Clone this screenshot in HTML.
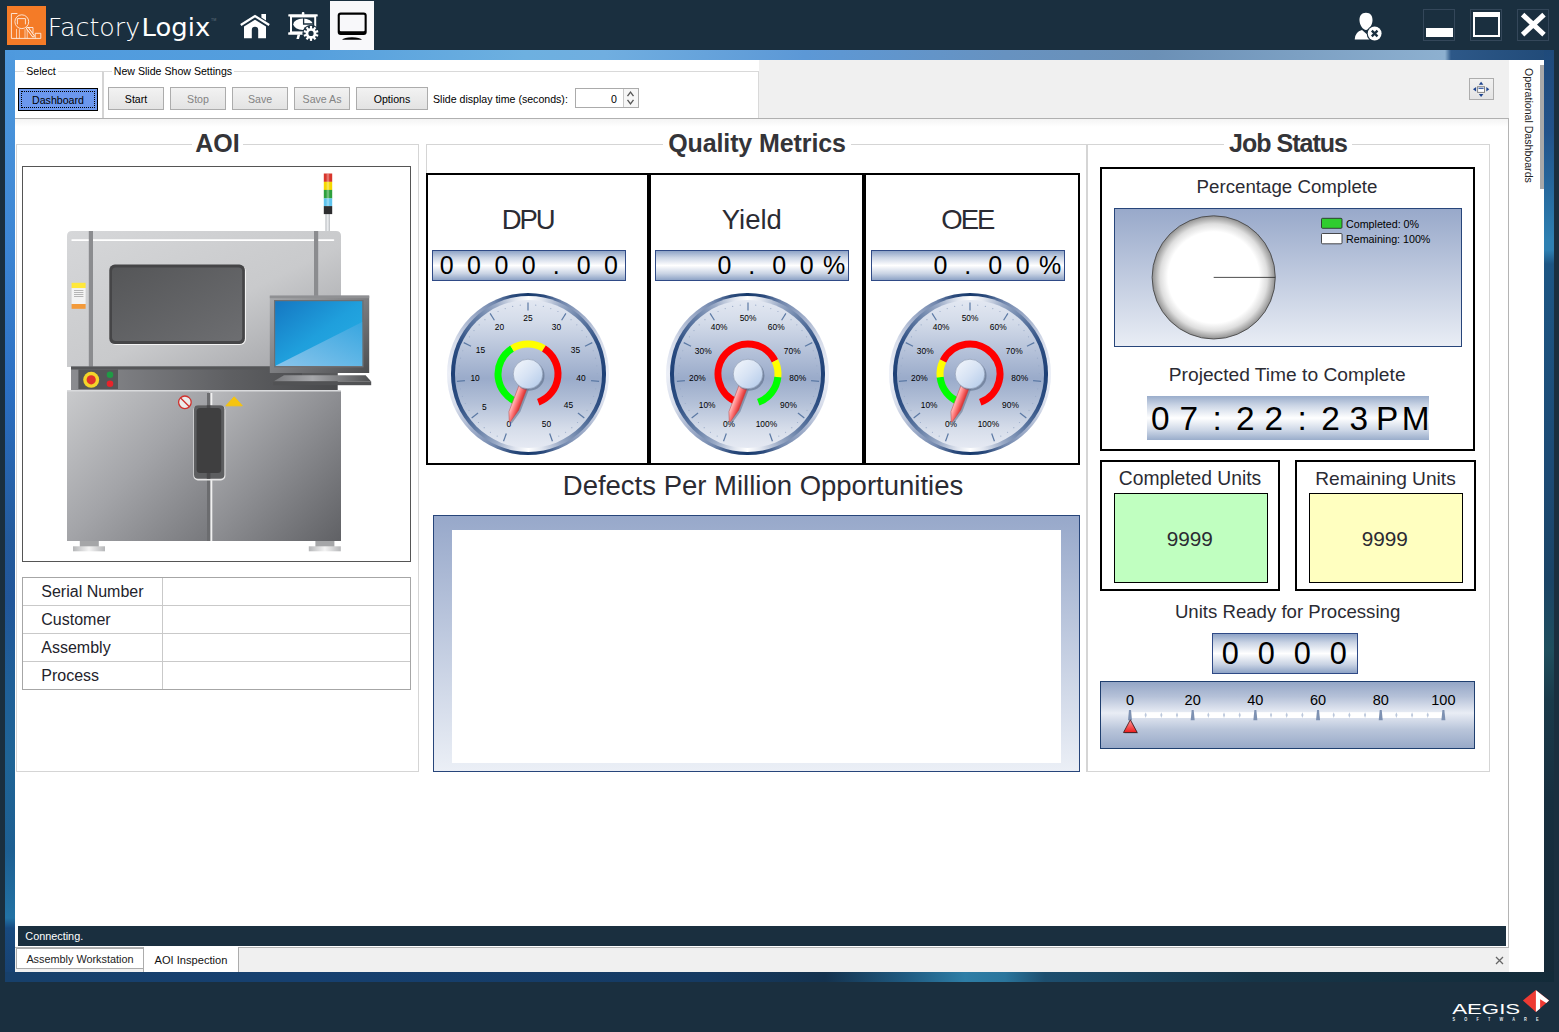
<!DOCTYPE html>
<html><head><meta charset="utf-8"><title>FactoryLogix - AOI Inspection</title>
<style>
html,body{margin:0;padding:0}
body{width:1559px;height:1032px;overflow:hidden;background:#1a2f3f;position:relative;font-family:"Liberation Sans",sans-serif;color:#000}
div{position:absolute;box-sizing:border-box}
svg{position:absolute;overflow:visible}
.t{white-space:nowrap}
.ui{font-size:10.6px;line-height:12px;white-space:nowrap}
.btn{border:1px solid #acacac;background:linear-gradient(#f2f2f2,#e3e3e3);text-align:center;font-size:10.6px;line-height:22.5px;white-space:nowrap}
.dis{color:#838383}
.h{font-weight:bold;color:#343438;white-space:nowrap;background:#fff;text-align:center}
.lbl{color:#2b2b33;white-space:nowrap}
.dig{background:linear-gradient(#8ea3c6 0%,#c9d3e4 22%,#ffffff 50%,#c9d3e4 78%,#8ea3c6 100%);border:1px solid #2f4a86}
.dc{text-align:center;white-space:nowrap;color:#000}
.gb{border:1px solid #d5d5d5}
.bb{border:2px solid #000;background:#fff}
</style></head><body>

<div style="left:5px;top:50px;width:1549px;height:10px;background:linear-gradient(90deg,#4f9ade 0px,#559fdd 300px,#6db0e0 520px,#70aee0 600px,#5c98d6 800px,#6792c0 1000px,#6b90b6 1150px,#8db0d0 1438px,#8db0d0 1440px,#2d5888 1446px,#204a78 1549px)"></div>
<div style="left:5px;top:50px;width:10px;height:932px;background:linear-gradient(180deg,#4f9ade 0px,#3d86d4 190px,#2b6fc2 340px,#235a9c 490px,#21569a 550px,#1f5f98 630px,#1f6496 710px,#1d5f92 800px,#2272a4 868px,#184a80 878px,#17406f 932px)"></div>
<div style="left:1544px;top:50px;width:10px;height:932px;background:linear-gradient(180deg,#1f4a7a 0px,#22528a 80px,#25659a 130px,#2e80b2 190px,#2e80b2 200px,#1d5684 214px,#1c4a74 430px,#1a4466 530px,#1f4f5e 600px,#1a3a4a 650px,#172f3f 750px,#152a38 932px)"></div>
<div style="left:5px;top:972px;width:1549px;height:10px;background:linear-gradient(90deg,#17406b 0px,#164070 300px,#153a62 700px,#14324e 820px,#1f5a80 900px,#2e7ea6 960px,#2a759c 1000px,#1d4e6e 1040px,#163548 1250px,#132b39 1549px)"></div>
<div style="left:15px;top:60px;width:1529px;height:912px;background:#fff"></div>
<div style="left:759px;top:60px;width:750px;height:58px;background:#f0f0f0"></div>
<div style="left:15px;top:117.5px;width:1494px;height:1.6px;background:#b0b0b0"></div>
<div style="left:15px;top:119px;width:1494px;height:8px;background:linear-gradient(#f4f4f4,#ffffff)"></div>
<div style="left:1508px;top:118px;width:1px;height:830px;background:#b4b4b4"></div>
<div style="left:15px;top:71px;width:87px;height:1px;background:#d9d9d9"></div>
<div style="left:102px;top:71px;width:2px;height:47px;background:#d4d4d4"></div>
<div class="ui" style="left:24px;top:65px;width:34px;height:12px;background:#fff;text-align:center">Select</div>
<div style="left:103px;top:71px;width:656px;height:47px;border-top:1px solid #d9d9d9;border-right:1px solid #d9d9d9"></div>
<div class="ui" style="left:112px;top:65px;width:122px;height:12px;background:#fff;text-align:center">New Slide Show Settings</div>
<div style="left:18px;top:88px;width:80px;height:23px;border:1.3px solid #000;background:#6c98ee"></div>
<div class="ui" style="left:21px;top:91px;width:74px;height:17px;border:1px dotted #000;text-align:center;line-height:16.5px">Dashboard</div>
<div class="btn" style="left:108px;top:87px;width:56px;height:23px;">Start</div>
<div class="btn dis" style="left:170px;top:87px;width:56px;height:23px;">Stop</div>
<div class="btn dis" style="left:232px;top:87px;width:56px;height:23px;">Save</div>
<div class="btn dis" style="left:294px;top:87px;width:56px;height:23px;">Save As</div>
<div class="btn" style="left:356px;top:87px;width:72px;height:23px;">Options</div>
<div class="t" style="left:433px;top:92.5px;font-size:10.6px;line-height:10.6px;line-height:12px">Slide display time (seconds):</div>
<div style="left:575px;top:88px;width:64px;height:20px;border:1px solid #ababab;background:#fff"></div>
<div style="left:623px;top:89px;width:15px;height:18px;border-left:1px solid #c8c8c8;background:#f6f6f6"></div>
<div class="t" style="left:611px;top:92.5px;font-size:10.6px;line-height:10.6px;line-height:12px">0</div>
<svg style="left:623px;top:89px" width="15" height="18" viewBox="0 0 15 18"><path d="M4.5 7.2 L7.5 3.2 L10.5 7.2 M4.5 10.8 L7.5 14.8 L10.5 10.8" fill="none" stroke="#555" stroke-width="1.3"/></svg>
<div style="left:1469px;top:78px;width:25px;height:22px;border:1px solid #adadad;background:linear-gradient(#f1f1f1,#e4e4e4)"></div>
<svg style="left:1469px;top:78px" width="25" height="22" viewBox="1469 78 25 22"><g fill="#1f458f"><path d="M1481.1 81.7 L1483.4 84.8 H1478.8Z"/><path d="M1481.1 96.9 L1483.4 94.1 H1478.8Z"/><path d="M1473 89.3 L1476.1 87 V91.6Z"/><path d="M1489.3 89.3 L1486.3 87 V91.6Z"/></g><rect x="1477.6" y="86.7" width="6.9" height="5.7" fill="#fff" stroke="#858585" stroke-width="1"/><rect x="1478.2" y="87.3" width="5.7" height="1.9" fill="#c9d7f0"/><rect x="1478.6" y="87.8" width="4.9" height="1" fill="#2b4f9a"/></svg>
<div style="left:1540px;top:65px;width:4px;height:124px;background:#a9a9a9"></div>
<div class="ui" style="left:1528.6px;top:68px;width:0;height:0;transform:rotate(90deg);transform-origin:0 0"><div class="ui" style="left:0;top:-6px;color:#222">Operational Dashboards</div></div>
<div style="left:18px;top:926px;width:1488px;height:20px;background:#1a2f3f"></div>
<div class="t" style="left:25.3px;top:929.6px;font-size:10.85px;line-height:10.85px;color:#fff;line-height:12px">Connecting.</div>
<div style="left:15px;top:947px;width:1494px;height:25px;background:#f0f0f0;border-top:1px solid #b4b4b4"></div>
<div style="left:16px;top:948px;width:128px;height:21px;background:#fff;border:1px solid #acacac"></div>
<div class="t" style="left:26.4px;top:953px;font-size:10.85px;line-height:10.85px;line-height:12px;color:#222">Assembly Workstation</div>
<div style="left:143px;top:947px;width:96px;height:25px;background:#fff;border-right:1px solid #acacac;border-left:1px solid #acacac"></div>
<div class="t" style="left:154.6px;top:954px;font-size:11.1px;line-height:11.1px;line-height:12px;color:#111">AOI Inspection</div>
<svg style="left:1495px;top:956px" width="9" height="9" viewBox="0 0 9 9"><path d="M1 1 L8 8 M8 1 L1 8" stroke="#666" stroke-width="1.3" fill="none"/></svg>
<div class="gb" style="left:16px;top:144px;width:403px;height:628px;"></div>
<div class="h" style="left:192px;top:129.3px;width:51px;height:28px;font-size:25px;line-height:28px">AOI</div>
<div style="left:426px;top:144px;width:662px;height:628px;border-top:1px solid #d5d5d5;border-right:1px solid #d5d5d5"></div>
<div style="left:426px;top:144px;width:1px;height:30px;background:#d5d5d5"></div>
<div class="h" style="left:663px;top:129.3px;width:188px;height:28px;font-size:25px;line-height:28px;letter-spacing:-0.1px">Quality Metrics</div>
<div class="gb" style="left:1086px;top:144px;width:404px;height:628px;"></div>
<div class="h" style="left:1224px;top:129.3px;width:128px;height:28px;font-size:25px;line-height:28px;letter-spacing:-1px">Job Status</div>
<div style="left:7px;top:6px;width:39px;height:39px;background:#f47b27"></div>
<svg style="left:7px;top:6px" width="39" height="39" viewBox="0 0 39 39" fill="none" stroke="#fff" stroke-width="0.85" opacity="0.92">
<path d="M10.4 7.5 H4.4 V32.4 H33.8 V27.3 H28.2 V32.4"/>
<circle cx="14.8" cy="15.7" r="6.9"/>
<path d="M10.4 18.4 V12.6 H18.4 V18.4"/>
<path d="M9.5 22.9 V32.4 M12.4 23.2 V32.4 M18 23.2 V32.4 M20.2 22.5 V32.4" stroke-opacity="0.8"/>
<path d="M21 21.5 H26 V27"/>
<path d="M20.6 22.4 L26.2 29.8" stroke-width="3" stroke-linecap="round"/>
<path d="M20.6 22.4 L26.2 29.8" stroke="#f47b27" stroke-width="1.3" stroke-linecap="round"/>
</svg>
<svg style="left:0;top:0" width="230" height="50" viewBox="0 0 230 50">
<text x="47.8" y="35.5" font-family="'DejaVu Sans Light','DejaVu Sans','Liberation Sans',sans-serif" font-weight="200" font-size="24.5" fill="#fff" textLength="92.3" lengthAdjust="spacingAndGlyphs">Factory</text>
<text x="141.6" y="35.5" font-family="'DejaVu Sans','Liberation Sans',sans-serif" font-weight="normal" font-size="24.5" fill="#fff" textLength="68.6" lengthAdjust="spacingAndGlyphs">Logix</text>
<text x="211" y="21" font-family="'Liberation Sans',sans-serif" font-size="3.6" fill="#66747f">TM</text>
</svg>
<svg style="left:238px;top:10px" width="36" height="32" viewBox="238 10 36 32">
<path d="M240.8 25 L255 16 L269.2 25" fill="none" stroke="#fff" stroke-width="2.3" stroke-linejoin="miter"/>
<path d="M261.4 13.9 H266 V20.6 L261.4 17.6Z" fill="#fff"/>
<path d="M244 26.6 L255 19.7 L266 26.6 V38.2 H258.2 V30 A3.2 3.2 0 0 0 251.8 30 V38.2 H244Z" fill="#fff"/>
</svg>
<svg style="left:286px;top:10px" width="36" height="34" viewBox="286 10 36 34">
<rect x="301.8" y="12" width="2.6" height="3" rx="1" fill="#fff"/>
<rect x="288.3" y="14.2" width="29.4" height="2.3" rx="0.6" fill="#fff"/>
<rect x="291" y="16.4" width="24.2" height="16" fill="none" stroke="#fff" stroke-width="2"/>
<rect x="288.2" y="32.2" width="19" height="2.6" rx="0.6" fill="#fff"/>
<path d="M297.6 34.5 L296.4 38.9 H299 L300.2 34.5Z" fill="#fff"/>
<ellipse cx="303" cy="24.3" rx="9.7" ry="5.7" fill="#fff"/>
<path d="M303.6 18 V24 H313.4" fill="none" stroke="#1a2f3f" stroke-width="1.3"/>
<circle cx="311" cy="33.4" r="8.6" fill="#1a2f3f"/>
<g fill="#fff"><circle cx="311" cy="33.4" r="5.3"/>
<rect x="309.9" y="25.9" width="2.2" height="4" transform="rotate(0 311 33.4)"/><rect x="309.9" y="25.9" width="2.2" height="4" transform="rotate(36 311 33.4)"/><rect x="309.9" y="25.9" width="2.2" height="4" transform="rotate(72 311 33.4)"/><rect x="309.9" y="25.9" width="2.2" height="4" transform="rotate(108 311 33.4)"/><rect x="309.9" y="25.9" width="2.2" height="4" transform="rotate(144 311 33.4)"/><rect x="309.9" y="25.9" width="2.2" height="4" transform="rotate(180 311 33.4)"/><rect x="309.9" y="25.9" width="2.2" height="4" transform="rotate(216 311 33.4)"/><rect x="309.9" y="25.9" width="2.2" height="4" transform="rotate(252 311 33.4)"/><rect x="309.9" y="25.9" width="2.2" height="4" transform="rotate(288 311 33.4)"/><rect x="309.9" y="25.9" width="2.2" height="4" transform="rotate(324 311 33.4)"/>
</g>
<circle cx="311" cy="33.4" r="2.6" fill="#1a2f3f"/>
</svg>
<div style="left:330px;top:1px;width:44px;height:49px;background:#f8f8fa"></div>
<svg style="left:330px;top:1px" width="44" height="49" viewBox="330 1 44 49">
<rect x="337.7" y="12.5" width="29" height="22.5" rx="3" fill="#000"/>
<rect x="339.8" y="14.8" width="24.8" height="16.4" rx="1" fill="#f8f8fa"/>
<path d="M342 39.8 Q344 37.2 352 37.2 Q360 37.2 362 39.8Z" fill="#000"/>
</svg>
<svg style="left:1350px;top:8px" width="36" height="36" viewBox="1350 8 36 36">
<path d="M1366 12.7 C1370.6 12.7 1372.7 16 1372.5 20.5 C1372.3 25.2 1369 29.9 1366 29.9 C1363 29.9 1359.7 25.2 1359.5 20.5 C1359.3 16 1361.4 12.7 1366 12.7Z" fill="#fff"/>
<path d="M1354.7 39.5 Q1355 31.8 1362 30 L1366.6 34 L1370.5 30.6 Q1374 31 1376 33 V39.5Z" fill="#fff"/>
<circle cx="1374.65" cy="33.5" r="8" fill="#1a2f3f"/>
<circle cx="1374.65" cy="33.5" r="6.9" fill="#fff"/>
<path d="M1371.8 30.65 L1377.5 36.35 M1377.5 30.65 L1371.8 36.35" stroke="#1a2f3f" stroke-width="2.3" fill="none"/>
</svg>
<div style="left:1423px;top:9px;width:32px;height:32px;border:1px solid #34475a"></div>
<div style="left:1470px;top:9px;width:32px;height:32px;border:1px solid #34475a"></div>
<div style="left:1517px;top:9px;width:32px;height:32px;border:1px solid #34475a"></div>
<div style="left:1426px;top:28px;width:27px;height:8.5px;background:#fff"></div>
<div style="left:1472.5px;top:12px;width:27px;height:24.5px;border:2.5px solid #fff;border-top-width:5px"></div>
<svg style="left:1517px;top:9px" width="32" height="32" viewBox="1517 9 32 32"><path d="M1522.6 14.6 L1544 34.6 M1544 14.6 L1522.6 34.6" stroke="#fff" stroke-width="5" fill="none"/></svg>
<svg style="left:1445px;top:985px" width="114" height="44" viewBox="1445 985 114 44">
<text x="1452.2" y="1013.7" font-family="'Liberation Sans',sans-serif" font-size="14.9" fill="#fff" textLength="68" lengthAdjust="spacingAndGlyphs">AEGIS</text>
<text transform="translate(1452.6,1021.2) scale(0.68,1)" x="0" y="0" font-family="'Liberation Sans',sans-serif" font-weight="bold" font-size="5.7" fill="#e6eaee" textLength="126.5" lengthAdjust="spacing">SOFTWARE</text>
<path d="M1522.9 1000.4 L1535.9 990 L1549.2 1000.4 L1535.9 1012Z" fill="#ee3a33"/>
<path d="M1535.9 990.3 L1549 1000.4 L1546.3 1002.9 L1540.1 999.3 L1540.1 1008.4 L1535.9 1011.9Z" fill="#fff"/>
</svg>
<div style="left:22px;top:166px;width:389px;height:396px;border:1px solid #555;background:#fff"></div>
<svg style="left:22px;top:166px" width="389" height="396" viewBox="22 166 389 396">
<defs>
<linearGradient id="gTop" x1="0" y1="0" x2="1" y2="1"><stop offset="0" stop-color="#d6d7d9"/><stop offset="0.55" stop-color="#c9cacc"/><stop offset="1" stop-color="#9fa0a4"/></linearGradient>
<linearGradient id="gBotL" x1="0" y1="0" x2="1" y2="1"><stop offset="0" stop-color="#c9cacc"/><stop offset="0.5" stop-color="#a3a4a8"/><stop offset="1" stop-color="#77787c"/></linearGradient>
<linearGradient id="gBotR" x1="0" y1="0" x2="1" y2="1"><stop offset="0" stop-color="#b9babd"/><stop offset="0.5" stop-color="#8d8e92"/><stop offset="1" stop-color="#606165"/></linearGradient>
<linearGradient id="gStrip" x1="0" y1="0" x2="1" y2="0"><stop offset="0" stop-color="#8b8c90"/><stop offset="0.6" stop-color="#5e5f62"/><stop offset="1" stop-color="#48494b"/></linearGradient>
<linearGradient id="gWin" x1="0" y1="0" x2="1" y2="1"><stop offset="0" stop-color="#555658"/><stop offset="1" stop-color="#6d6e71"/></linearGradient>
<linearGradient id="gScr" x1="0" y1="0" x2="1" y2="1"><stop offset="0" stop-color="#1577c2"/><stop offset="0.5" stop-color="#1f9fdc"/><stop offset="1" stop-color="#29b0e6"/></linearGradient>
<linearGradient id="gScr2" x1="0" y1="1" x2="1" y2="0"><stop offset="0" stop-color="#9ccbee"/><stop offset="1" stop-color="#3ba6e0"/></linearGradient>
<linearGradient id="gMon" x1="0" y1="0" x2="1" y2="1"><stop offset="0" stop-color="#a9aaad"/><stop offset="0.5" stop-color="#7d7e81"/><stop offset="1" stop-color="#4c4d4f"/></linearGradient>
<linearGradient id="gKb" x1="0" y1="0" x2="1" y2="0"><stop offset="0" stop-color="#77787b"/><stop offset="0.4" stop-color="#a6a7aa"/><stop offset="1" stop-color="#4e4f51"/></linearGradient>
<linearGradient id="gFoot" x1="0" y1="0" x2="1" y2="0"><stop offset="0" stop-color="#b5b6b8"/><stop offset="0.5" stop-color="#f4f4f4"/><stop offset="1" stop-color="#b5b6b8"/></linearGradient>
<linearGradient id="gPole" x1="0" y1="0" x2="1" y2="0"><stop offset="0" stop-color="#b9bcc0"/><stop offset="0.5" stop-color="#eef0f2"/><stop offset="1" stop-color="#b9bcc0"/></linearGradient>
</defs>
<!-- light tower -->
<rect x="325.4" y="213" width="4.6" height="19" fill="url(#gPole)"/>
<rect x="323.8" y="173.5" width="8.4" height="8.4" fill="#d8362c"/>
<rect x="323.8" y="181.8" width="8.4" height="8.2" fill="#f5d800"/>
<rect x="323.8" y="189.9" width="8.4" height="8.6" fill="#2ea03c"/>
<rect x="323.8" y="198.4" width="8.4" height="7.8" fill="#5fc4ee"/>
<rect x="323.8" y="206.1" width="8.4" height="8" fill="#2d2d2f"/>
<rect x="326.6" y="173.5" width="2.6" height="32.6" fill="#fff" opacity="0.3"/>
<!-- feet -->
<rect x="79.8" y="540" width="19" height="7" fill="#a5a6a8"/>
<rect x="73" y="546.3" width="32" height="5" fill="url(#gFoot)"/>
<rect x="315.4" y="540" width="19" height="7" fill="#a5a6a8"/>
<rect x="308.8" y="546.3" width="32" height="5" fill="url(#gFoot)"/>
<!-- top body -->
<path d="M67 367 V236 Q67 231 72 231 H336 Q341 231 341 236 V367Z" fill="url(#gTop)"/>
<rect x="71.3" y="239.2" width="263" height="1.8" rx="0.9" fill="#fff"/>
<rect x="88.8" y="231" width="4.2" height="136" fill="#8b8c8f"/>
<rect x="314" y="231" width="4.2" height="70" fill="#8b8c8f"/>
<!-- label -->
<rect x="71.6" y="282.8" width="14" height="5.4" fill="#ffe83a"/>
<rect x="71.6" y="288.1" width="14" height="16" fill="#f3f3f3"/>
<path d="M74 290.5 H83.4 M74 292.5 H83.4 M74 294.5 H83.4 M74 296.5 H83.4" stroke="#9a9a9a" stroke-width="0.7"/>
<rect x="71.6" y="304" width="14" height="4.8" fill="#f39a3a"/>
<!-- window -->
<rect x="110" y="265.4" width="136" height="79.6" rx="6" fill="#f3f3f3"/>
<rect x="109.3" y="264.6" width="135.6" height="79.4" rx="5.5" fill="#454547"/>
<rect x="112" y="267.4" width="130.2" height="73.6" rx="4" fill="url(#gWin)"/>
<!-- strip -->
<rect x="71" y="366.5" width="266.7" height="24" fill="url(#gStrip)"/>
<rect x="71" y="366.5" width="266.7" height="3" fill="#555658"/>
<rect x="78.4" y="369.4" width="39.6" height="19.6" fill="#555658"/>
<circle cx="91.2" cy="379.8" r="8" fill="#f3d52a"/>
<circle cx="91.2" cy="379.8" r="4.6" fill="#e0332b"/>
<circle cx="110" cy="374.7" r="3.3" fill="#1f9a45"/>
<circle cx="110" cy="383.7" r="3.3" fill="#e8232a"/>
<!-- bottom body -->
<rect x="67" y="390" width="274" height="2" fill="#d9dadc"/>
<rect x="67" y="391.5" width="142" height="149.5" fill="url(#gBotL)"/>
<rect x="209" y="391.5" width="132" height="149.5" fill="url(#gBotR)"/>
<rect x="207" y="393" width="3.6" height="148" fill="#6b6c6f"/>
<rect x="210.4" y="393" width="1.9" height="148" fill="#f1f1f1"/>
<!-- handle -->
<rect x="193.4" y="405.4" width="32" height="75" rx="4.5" fill="#e8e8e8"/>
<rect x="194" y="405.2" width="30.4" height="73.6" rx="4" fill="#5d5e60"/>
<rect x="206.8" y="405.2" width="3.6" height="73.6" fill="#49494b"/>
<rect x="196.6" y="408" width="24.6" height="65" rx="3.5" fill="#3f3f40"/>
<!-- no-entry -->
<circle cx="184.9" cy="402.3" r="6.3" fill="#ececec" stroke="#d0312d" stroke-width="1.3"/>
<path d="M180.4 397.8 L189.4 406.8" stroke="#d0312d" stroke-width="1.3"/>
<!-- warning triangle -->
<path d="M234.2 396.8 L242.3 405.8 H225.9Z" fill="#f5c40f" stroke="#f5c40f" stroke-width="1" stroke-linejoin="round"/>
<!-- monitor -->
<rect x="302" y="372" width="35" height="4" fill="#58595b"/>
<rect x="269.8" y="295.6" width="99.4" height="77.4" fill="url(#gMon)"/>
<rect x="269.8" y="295.6" width="99.4" height="2.6" fill="#8f9093"/>
<rect x="274" y="300" width="89.6" height="67.4" fill="#6e6f72"/>
<rect x="275.2" y="301.2" width="87" height="64.8" fill="url(#gScr)"/>
<path d="M276 365.6 L362.2 322 V366 H276Z" fill="url(#gScr2)" opacity="0.85"/>
<!-- keyboard -->
<path d="M273.4 381.6 L284 375.2 H365.6 L371.2 381.6Z" fill="url(#gKb)"/>
<rect x="273.4" y="381.4" width="97.8" height="3.8" fill="#515254"/>
</svg>
<div style="left:22px;top:577px;width:389px;height:113px;border:1px solid #a6a6a6;background:#fff"></div>
<div style="left:23px;top:605px;width:387px;height:1px;background:#c9c9c9"></div>
<div style="left:23px;top:633px;width:387px;height:1px;background:#c9c9c9"></div>
<div style="left:23px;top:661px;width:387px;height:1px;background:#c9c9c9"></div>
<div style="left:162px;top:578px;width:1px;height:111px;background:#c9c9c9"></div>
<div class="t" style="left:41.3px;top:583px;font-size:16px;line-height:16px;color:#23232b;line-height:18px">Serial Number</div>
<div class="t" style="left:41.3px;top:611px;font-size:16px;line-height:16px;color:#23232b;line-height:18px">Customer</div>
<div class="t" style="left:41.3px;top:639px;font-size:16px;line-height:16px;color:#23232b;line-height:18px">Assembly</div>
<div class="t" style="left:41.3px;top:667px;font-size:16px;line-height:16px;color:#23232b;line-height:18px">Process</div>
<div class="bb" style="left:426px;top:173px;width:223px;height:292px;"></div>
<div class="bb" style="left:649px;top:173px;width:215px;height:292px;"></div>
<div class="bb" style="left:864px;top:173px;width:216px;height:292px;"></div>
<div class="t" style="left:127.60000000000002px;width:800px;text-align:center;top:203.7px;font-size:27.5px;line-height:27.5px;color:#2b2b33;line-height:32px;letter-spacing:-2.2px">DPU</div>
<div class="t" style="left:351.79999999999995px;width:800px;text-align:center;top:203.7px;font-size:27.5px;line-height:27.5px;color:#2b2b33;line-height:32px">Yield</div>
<div class="t" style="left:567.3px;width:800px;text-align:center;top:203.7px;font-size:27.5px;line-height:27.5px;color:#2b2b33;line-height:32px;letter-spacing:-2px">OEE</div>
<div class="dig" style="left:432px;top:250px;width:194px;height:31px;"></div>
<div class="dc" style="left:432.9px;top:250px;width:27.4px;height:31px;line-height:31px;font-size:25px">0</div>
<div class="dc" style="left:460.3px;top:250px;width:27.4px;height:31px;line-height:31px;font-size:25px">0</div>
<div class="dc" style="left:487.7px;top:250px;width:27.4px;height:31px;line-height:31px;font-size:25px">0</div>
<div class="dc" style="left:515.1px;top:250px;width:27.4px;height:31px;line-height:31px;font-size:25px">0</div>
<div class="dc" style="left:542.5px;top:250px;width:27.4px;height:31px;line-height:31px;font-size:25px">.</div>
<div class="dc" style="left:569.9px;top:250px;width:27.4px;height:31px;line-height:31px;font-size:25px">0</div>
<div class="dc" style="left:597.3px;top:250px;width:27.4px;height:31px;line-height:31px;font-size:25px">0</div>
<div class="dig" style="left:655px;top:250px;width:194px;height:31px;"></div>
<div class="dc" style="left:710.7px;top:250px;width:27.4px;height:31px;line-height:31px;font-size:25px">0</div>
<div class="dc" style="left:738.1px;top:250px;width:27.4px;height:31px;line-height:31px;font-size:25px">.</div>
<div class="dc" style="left:765.5px;top:250px;width:27.4px;height:31px;line-height:31px;font-size:25px">0</div>
<div class="dc" style="left:792.9px;top:250px;width:27.4px;height:31px;line-height:31px;font-size:25px">0</div>
<div class="dc" style="left:820.3px;top:250px;width:27.4px;height:31px;line-height:31px;font-size:25px">%</div>
<div class="dig" style="left:871px;top:250px;width:194px;height:31px;"></div>
<div class="dc" style="left:926.7px;top:250px;width:27.4px;height:31px;line-height:31px;font-size:25px">0</div>
<div class="dc" style="left:954.1px;top:250px;width:27.4px;height:31px;line-height:31px;font-size:25px">.</div>
<div class="dc" style="left:981.5px;top:250px;width:27.4px;height:31px;line-height:31px;font-size:25px">0</div>
<div class="dc" style="left:1008.9px;top:250px;width:27.4px;height:31px;line-height:31px;font-size:25px">0</div>
<div class="dc" style="left:1036.3px;top:250px;width:27.4px;height:31px;line-height:31px;font-size:25px">%</div>
<div style="left:447.09999999999997px;top:292.8px;width:162.4px;height:162.4px;border-radius:50%;background:conic-gradient(from 0deg,#173a6c 0deg,#2c4b7c 12deg,#7086ac 25deg,#a0aeca 45deg,#d5dbe9 65deg,#eceff7 90deg,#d5dbe9 115deg,#a0aeca 135deg,#7086ac 155deg,#2c4b7c 168deg,#173a6c 180deg,#2c4b7c 192deg,#7086ac 205deg,#a0aeca 225deg,#d5dbe9 245deg,#eceff7 270deg,#d5dbe9 295deg,#a0aeca 315deg,#7086ac 335deg,#2c4b7c 348deg,#173a6c 360deg)"></div>
<div style="left:450.69999999999993px;top:296.4px;width:155.2px;height:155.2px;border-radius:50%;background:conic-gradient(from 0deg,#ffffff 0deg,#e0e5ef 10deg,#9aaac6 25deg,#5f79a2 45deg,#2f5084 65deg,#1e4076 90deg,#2f5084 115deg,#5f79a2 135deg,#9aaac6 155deg,#e0e5ef 170deg,#ffffff 180deg,#e0e5ef 190deg,#9aaac6 205deg,#5f79a2 225deg,#2f5084 245deg,#1e4076 270deg,#2f5084 295deg,#5f79a2 315deg,#9aaac6 335deg,#e0e5ef 350deg,#ffffff 360deg)"></div>
<div style="left:454.69999999999993px;top:300.4px;width:147.2px;height:147.2px;border-radius:50%;background:linear-gradient(#e3e8f2 0%,#d3dbe9 15%,#b3c0d8 36%,#9aabca 53%,#b4c1d8 70%,#d6ddea 87%,#e6eaf3 100%)"></div>
<svg style="left:446.29999999999995px;top:292px" width="164" height="164" viewBox="-82 -82 164 164"><defs><linearGradient id="nda" x1="0" y1="0" x2="1" y2="0"><stop offset="0" stop-color="#ffc4c4"/><stop offset="0.45" stop-color="#ff7c7c"/><stop offset="1" stop-color="#dc2c2c"/></linearGradient><linearGradient id="hba" x1="0" y1="0" x2="1" y2="1"><stop offset="0" stop-color="#f4f7fc"/><stop offset="0.5" stop-color="#d7e3f4"/><stop offset="1" stop-color="#b0c8e8"/></linearGradient></defs><circle cx="-30.81" cy="62.07" r="0.6" fill="#9aabc8"/><circle cx="-37.54" cy="58.25" r="0.6" fill="#9aabc8"/><circle cx="-43.80" cy="53.70" r="0.6" fill="#9aabc8"/><circle cx="-49.51" cy="48.49" r="0.6" fill="#9aabc8"/><circle cx="-59.02" cy="36.31" r="0.6" fill="#9aabc8"/><circle cx="-62.70" cy="29.51" r="0.6" fill="#9aabc8"/><circle cx="-65.60" cy="22.33" r="0.6" fill="#9aabc8"/><circle cx="-67.68" cy="14.88" r="0.6" fill="#9aabc8"/><circle cx="-69.30" cy="-0.48" r="0.6" fill="#9aabc8"/><circle cx="-68.81" cy="-8.21" r="0.6" fill="#9aabc8"/><circle cx="-67.47" cy="-15.82" r="0.6" fill="#9aabc8"/><circle cx="-65.28" cy="-23.25" r="0.6" fill="#9aabc8"/><circle cx="-58.51" cy="-37.13" r="0.6" fill="#9aabc8"/><circle cx="-54.01" cy="-43.42" r="0.6" fill="#9aabc8"/><circle cx="-48.83" cy="-49.17" r="0.6" fill="#9aabc8"/><circle cx="-43.05" cy="-54.31" r="0.6" fill="#9aabc8"/><circle cx="-29.94" cy="-62.50" r="0.6" fill="#9aabc8"/><circle cx="-22.79" cy="-65.45" r="0.6" fill="#9aabc8"/><circle cx="-15.35" cy="-67.58" r="0.6" fill="#9aabc8"/><circle cx="-7.72" cy="-68.87" r="0.6" fill="#9aabc8"/><circle cx="7.72" cy="-68.87" r="0.6" fill="#9aabc8"/><circle cx="15.35" cy="-67.58" r="0.6" fill="#9aabc8"/><circle cx="22.79" cy="-65.45" r="0.6" fill="#9aabc8"/><circle cx="29.94" cy="-62.50" r="0.6" fill="#9aabc8"/><circle cx="43.05" cy="-54.31" r="0.6" fill="#9aabc8"/><circle cx="48.83" cy="-49.17" r="0.6" fill="#9aabc8"/><circle cx="54.01" cy="-43.42" r="0.6" fill="#9aabc8"/><circle cx="58.51" cy="-37.13" r="0.6" fill="#9aabc8"/><circle cx="65.28" cy="-23.25" r="0.6" fill="#9aabc8"/><circle cx="67.47" cy="-15.82" r="0.6" fill="#9aabc8"/><circle cx="68.81" cy="-8.21" r="0.6" fill="#9aabc8"/><circle cx="69.30" cy="-0.48" r="0.6" fill="#9aabc8"/><circle cx="67.68" cy="14.88" r="0.6" fill="#9aabc8"/><circle cx="65.60" cy="22.33" r="0.6" fill="#9aabc8"/><circle cx="62.70" cy="29.51" r="0.6" fill="#9aabc8"/><circle cx="59.02" cy="36.31" r="0.6" fill="#9aabc8"/><circle cx="49.51" cy="48.49" r="0.6" fill="#9aabc8"/><circle cx="43.80" cy="53.70" r="0.6" fill="#9aabc8"/><circle cx="37.54" cy="58.25" r="0.6" fill="#9aabc8"/><circle cx="30.81" cy="62.07" r="0.6" fill="#9aabc8"/><line x1="-24.45" y1="67.19" x2="-21.68" y2="59.58" stroke="#5b79a4" stroke-width="1.2"/><line x1="-56.34" y1="44.02" x2="-49.96" y2="39.03" stroke="#5b79a4" stroke-width="1.2"/><line x1="-71.11" y1="7.47" x2="-63.05" y2="6.63" stroke="#5b79a4" stroke-width="1.2"/><line x1="-64.26" y1="-31.34" x2="-56.98" y2="-27.79" stroke="#5b79a4" stroke-width="1.2"/><line x1="-37.89" y1="-60.64" x2="-33.60" y2="-53.77" stroke="#5b79a4" stroke-width="1.2"/><line x1="-0.00" y1="-71.50" x2="-0.00" y2="-63.40" stroke="#5b79a4" stroke-width="1.2"/><line x1="37.89" y1="-60.64" x2="33.60" y2="-53.77" stroke="#5b79a4" stroke-width="1.2"/><line x1="64.26" y1="-31.34" x2="56.98" y2="-27.79" stroke="#5b79a4" stroke-width="1.2"/><line x1="71.11" y1="7.47" x2="63.05" y2="6.63" stroke="#5b79a4" stroke-width="1.2"/><line x1="56.34" y1="44.02" x2="49.96" y2="39.03" stroke="#5b79a4" stroke-width="1.2"/><line x1="24.45" y1="67.19" x2="21.68" y2="59.58" stroke="#5b79a4" stroke-width="1.2"/><text x="-19.30" y="52.70" text-anchor="middle" font-family="'Liberation Sans',sans-serif" font-size="8.4" fill="#000">0</text><text x="-43.80" y="35.60" text-anchor="middle" font-family="'Liberation Sans',sans-serif" font-size="8.4" fill="#000">5</text><text x="-52.90" y="7.05" text-anchor="middle" font-family="'Liberation Sans',sans-serif" font-size="8.4" fill="#000">10</text><text x="-47.50" y="-21.30" text-anchor="middle" font-family="'Liberation Sans',sans-serif" font-size="8.4" fill="#000">15</text><text x="-28.50" y="-44.00" text-anchor="middle" font-family="'Liberation Sans',sans-serif" font-size="8.4" fill="#000">20</text><text x="0.00" y="-53.20" text-anchor="middle" font-family="'Liberation Sans',sans-serif" font-size="8.4" fill="#000">25</text><text x="28.50" y="-44.00" text-anchor="middle" font-family="'Liberation Sans',sans-serif" font-size="8.4" fill="#000">30</text><text x="47.50" y="-21.30" text-anchor="middle" font-family="'Liberation Sans',sans-serif" font-size="8.4" fill="#000">35</text><text x="53.00" y="7.05" text-anchor="middle" font-family="'Liberation Sans',sans-serif" font-size="8.4" fill="#000">40</text><text x="40.50" y="33.80" text-anchor="middle" font-family="'Liberation Sans',sans-serif" font-size="8.4" fill="#000">45</text><text x="18.40" y="52.70" text-anchor="middle" font-family="'Liberation Sans',sans-serif" font-size="8.4" fill="#000">50</text><path d="M-10.26 28.19 A30 30 0 0 1 -15.90 -25.44" fill="none" stroke="#00ff00" stroke-width="7"/><path d="M-15.90 -25.44 A30 30 0 0 1 15.90 -25.44" fill="none" stroke="#ffff00" stroke-width="7"/><path d="M15.90 -25.44 A30 30 0 0 1 10.26 28.19" fill="none" stroke="#ff0000" stroke-width="7"/><g transform="rotate(21)"><path d="M-2.2 2 L-2.2 43 L1.8 52 L2.6 52 L6.4 38 L6.4 2 Z" fill="#55657f" opacity="0.5"/><path d="M-4.3 0 L-4.3 42 L-0.4 51.2 L0.5 51.2 L4.3 37 L4.3 0 Z" fill="url(#nda)" stroke="#c24848" stroke-width="0.5"/></g><circle cx="1.5" cy="1.7" r="15" fill="#56667f" opacity="0.55"/><circle cx="0" cy="0" r="14.8" fill="url(#hba)" stroke="#8896ad" stroke-width="0.6"/></svg>
<div style="left:666.3px;top:292.8px;width:162.4px;height:162.4px;border-radius:50%;background:conic-gradient(from 0deg,#173a6c 0deg,#2c4b7c 12deg,#7086ac 25deg,#a0aeca 45deg,#d5dbe9 65deg,#eceff7 90deg,#d5dbe9 115deg,#a0aeca 135deg,#7086ac 155deg,#2c4b7c 168deg,#173a6c 180deg,#2c4b7c 192deg,#7086ac 205deg,#a0aeca 225deg,#d5dbe9 245deg,#eceff7 270deg,#d5dbe9 295deg,#a0aeca 315deg,#7086ac 335deg,#2c4b7c 348deg,#173a6c 360deg)"></div>
<div style="left:669.9px;top:296.4px;width:155.2px;height:155.2px;border-radius:50%;background:conic-gradient(from 0deg,#ffffff 0deg,#e0e5ef 10deg,#9aaac6 25deg,#5f79a2 45deg,#2f5084 65deg,#1e4076 90deg,#2f5084 115deg,#5f79a2 135deg,#9aaac6 155deg,#e0e5ef 170deg,#ffffff 180deg,#e0e5ef 190deg,#9aaac6 205deg,#5f79a2 225deg,#2f5084 245deg,#1e4076 270deg,#2f5084 295deg,#5f79a2 315deg,#9aaac6 335deg,#e0e5ef 350deg,#ffffff 360deg)"></div>
<div style="left:673.9px;top:300.4px;width:147.2px;height:147.2px;border-radius:50%;background:linear-gradient(#e3e8f2 0%,#d3dbe9 15%,#b3c0d8 36%,#9aabca 53%,#b4c1d8 70%,#d6ddea 87%,#e6eaf3 100%)"></div>
<svg style="left:665.5px;top:292px" width="164" height="164" viewBox="-82 -82 164 164"><defs><linearGradient id="ndb" x1="0" y1="0" x2="1" y2="0"><stop offset="0" stop-color="#ffc4c4"/><stop offset="0.45" stop-color="#ff7c7c"/><stop offset="1" stop-color="#dc2c2c"/></linearGradient><linearGradient id="hbb" x1="0" y1="0" x2="1" y2="1"><stop offset="0" stop-color="#f4f7fc"/><stop offset="0.5" stop-color="#d7e3f4"/><stop offset="1" stop-color="#b0c8e8"/></linearGradient></defs><circle cx="-30.81" cy="62.07" r="0.6" fill="#9aabc8"/><circle cx="-37.54" cy="58.25" r="0.6" fill="#9aabc8"/><circle cx="-43.80" cy="53.70" r="0.6" fill="#9aabc8"/><circle cx="-49.51" cy="48.49" r="0.6" fill="#9aabc8"/><circle cx="-59.02" cy="36.31" r="0.6" fill="#9aabc8"/><circle cx="-62.70" cy="29.51" r="0.6" fill="#9aabc8"/><circle cx="-65.60" cy="22.33" r="0.6" fill="#9aabc8"/><circle cx="-67.68" cy="14.88" r="0.6" fill="#9aabc8"/><circle cx="-69.30" cy="-0.48" r="0.6" fill="#9aabc8"/><circle cx="-68.81" cy="-8.21" r="0.6" fill="#9aabc8"/><circle cx="-67.47" cy="-15.82" r="0.6" fill="#9aabc8"/><circle cx="-65.28" cy="-23.25" r="0.6" fill="#9aabc8"/><circle cx="-58.51" cy="-37.13" r="0.6" fill="#9aabc8"/><circle cx="-54.01" cy="-43.42" r="0.6" fill="#9aabc8"/><circle cx="-48.83" cy="-49.17" r="0.6" fill="#9aabc8"/><circle cx="-43.05" cy="-54.31" r="0.6" fill="#9aabc8"/><circle cx="-29.94" cy="-62.50" r="0.6" fill="#9aabc8"/><circle cx="-22.79" cy="-65.45" r="0.6" fill="#9aabc8"/><circle cx="-15.35" cy="-67.58" r="0.6" fill="#9aabc8"/><circle cx="-7.72" cy="-68.87" r="0.6" fill="#9aabc8"/><circle cx="7.72" cy="-68.87" r="0.6" fill="#9aabc8"/><circle cx="15.35" cy="-67.58" r="0.6" fill="#9aabc8"/><circle cx="22.79" cy="-65.45" r="0.6" fill="#9aabc8"/><circle cx="29.94" cy="-62.50" r="0.6" fill="#9aabc8"/><circle cx="43.05" cy="-54.31" r="0.6" fill="#9aabc8"/><circle cx="48.83" cy="-49.17" r="0.6" fill="#9aabc8"/><circle cx="54.01" cy="-43.42" r="0.6" fill="#9aabc8"/><circle cx="58.51" cy="-37.13" r="0.6" fill="#9aabc8"/><circle cx="65.28" cy="-23.25" r="0.6" fill="#9aabc8"/><circle cx="67.47" cy="-15.82" r="0.6" fill="#9aabc8"/><circle cx="68.81" cy="-8.21" r="0.6" fill="#9aabc8"/><circle cx="69.30" cy="-0.48" r="0.6" fill="#9aabc8"/><circle cx="67.68" cy="14.88" r="0.6" fill="#9aabc8"/><circle cx="65.60" cy="22.33" r="0.6" fill="#9aabc8"/><circle cx="62.70" cy="29.51" r="0.6" fill="#9aabc8"/><circle cx="59.02" cy="36.31" r="0.6" fill="#9aabc8"/><circle cx="49.51" cy="48.49" r="0.6" fill="#9aabc8"/><circle cx="43.80" cy="53.70" r="0.6" fill="#9aabc8"/><circle cx="37.54" cy="58.25" r="0.6" fill="#9aabc8"/><circle cx="30.81" cy="62.07" r="0.6" fill="#9aabc8"/><line x1="-24.45" y1="67.19" x2="-21.68" y2="59.58" stroke="#5b79a4" stroke-width="1.2"/><line x1="-56.34" y1="44.02" x2="-49.96" y2="39.03" stroke="#5b79a4" stroke-width="1.2"/><line x1="-71.11" y1="7.47" x2="-63.05" y2="6.63" stroke="#5b79a4" stroke-width="1.2"/><line x1="-64.26" y1="-31.34" x2="-56.98" y2="-27.79" stroke="#5b79a4" stroke-width="1.2"/><line x1="-37.89" y1="-60.64" x2="-33.60" y2="-53.77" stroke="#5b79a4" stroke-width="1.2"/><line x1="-0.00" y1="-71.50" x2="-0.00" y2="-63.40" stroke="#5b79a4" stroke-width="1.2"/><line x1="37.89" y1="-60.64" x2="33.60" y2="-53.77" stroke="#5b79a4" stroke-width="1.2"/><line x1="64.26" y1="-31.34" x2="56.98" y2="-27.79" stroke="#5b79a4" stroke-width="1.2"/><line x1="71.11" y1="7.47" x2="63.05" y2="6.63" stroke="#5b79a4" stroke-width="1.2"/><line x1="56.34" y1="44.02" x2="49.96" y2="39.03" stroke="#5b79a4" stroke-width="1.2"/><line x1="24.45" y1="67.19" x2="21.68" y2="59.58" stroke="#5b79a4" stroke-width="1.2"/><text x="-19.00" y="52.70" text-anchor="middle" font-family="'Liberation Sans',sans-serif" font-size="8.4" fill="#000">0%</text><text x="-40.90" y="33.80" text-anchor="middle" font-family="'Liberation Sans',sans-serif" font-size="8.4" fill="#000">10%</text><text x="-50.60" y="7.05" text-anchor="middle" font-family="'Liberation Sans',sans-serif" font-size="8.4" fill="#000">20%</text><text x="-44.80" y="-20.00" text-anchor="middle" font-family="'Liberation Sans',sans-serif" font-size="8.4" fill="#000">30%</text><text x="-28.90" y="-44.00" text-anchor="middle" font-family="'Liberation Sans',sans-serif" font-size="8.4" fill="#000">40%</text><text x="0.00" y="-53.20" text-anchor="middle" font-family="'Liberation Sans',sans-serif" font-size="8.4" fill="#000">50%</text><text x="28.20" y="-44.00" text-anchor="middle" font-family="'Liberation Sans',sans-serif" font-size="8.4" fill="#000">60%</text><text x="44.20" y="-20.00" text-anchor="middle" font-family="'Liberation Sans',sans-serif" font-size="8.4" fill="#000">70%</text><text x="49.70" y="7.05" text-anchor="middle" font-family="'Liberation Sans',sans-serif" font-size="8.4" fill="#000">80%</text><text x="40.50" y="33.80" text-anchor="middle" font-family="'Liberation Sans',sans-serif" font-size="8.4" fill="#000">90%</text><text x="18.40" y="52.70" text-anchor="middle" font-family="'Liberation Sans',sans-serif" font-size="8.4" fill="#000">100%</text><path d="M-10.26 28.19 A30 30 0 1 1 26.96 -13.15" fill="none" stroke="#ff0000" stroke-width="7"/><path d="M26.96 -13.15 A30 30 0 0 1 29.84 3.14" fill="none" stroke="#ffff00" stroke-width="7"/><path d="M29.84 3.14 A30 30 0 0 1 10.26 28.19" fill="none" stroke="#00ff00" stroke-width="7"/><g transform="rotate(21)"><path d="M-2.2 2 L-2.2 43 L1.8 52 L2.6 52 L6.4 38 L6.4 2 Z" fill="#55657f" opacity="0.5"/><path d="M-4.3 0 L-4.3 42 L-0.4 51.2 L0.5 51.2 L4.3 37 L4.3 0 Z" fill="url(#ndb)" stroke="#c24848" stroke-width="0.5"/></g><circle cx="1.5" cy="1.7" r="15" fill="#56667f" opacity="0.55"/><circle cx="0" cy="0" r="14.8" fill="url(#hbb)" stroke="#8896ad" stroke-width="0.6"/></svg>
<div style="left:889.0999999999999px;top:292.8px;width:162.4px;height:162.4px;border-radius:50%;background:conic-gradient(from 0deg,#173a6c 0deg,#2c4b7c 12deg,#7086ac 25deg,#a0aeca 45deg,#d5dbe9 65deg,#eceff7 90deg,#d5dbe9 115deg,#a0aeca 135deg,#7086ac 155deg,#2c4b7c 168deg,#173a6c 180deg,#2c4b7c 192deg,#7086ac 205deg,#a0aeca 225deg,#d5dbe9 245deg,#eceff7 270deg,#d5dbe9 295deg,#a0aeca 315deg,#7086ac 335deg,#2c4b7c 348deg,#173a6c 360deg)"></div>
<div style="left:892.6999999999999px;top:296.4px;width:155.2px;height:155.2px;border-radius:50%;background:conic-gradient(from 0deg,#ffffff 0deg,#e0e5ef 10deg,#9aaac6 25deg,#5f79a2 45deg,#2f5084 65deg,#1e4076 90deg,#2f5084 115deg,#5f79a2 135deg,#9aaac6 155deg,#e0e5ef 170deg,#ffffff 180deg,#e0e5ef 190deg,#9aaac6 205deg,#5f79a2 225deg,#2f5084 245deg,#1e4076 270deg,#2f5084 295deg,#5f79a2 315deg,#9aaac6 335deg,#e0e5ef 350deg,#ffffff 360deg)"></div>
<div style="left:896.6999999999999px;top:300.4px;width:147.2px;height:147.2px;border-radius:50%;background:linear-gradient(#e3e8f2 0%,#d3dbe9 15%,#b3c0d8 36%,#9aabca 53%,#b4c1d8 70%,#d6ddea 87%,#e6eaf3 100%)"></div>
<svg style="left:888.3px;top:292px" width="164" height="164" viewBox="-82 -82 164 164"><defs><linearGradient id="ndc" x1="0" y1="0" x2="1" y2="0"><stop offset="0" stop-color="#ffc4c4"/><stop offset="0.45" stop-color="#ff7c7c"/><stop offset="1" stop-color="#dc2c2c"/></linearGradient><linearGradient id="hbc" x1="0" y1="0" x2="1" y2="1"><stop offset="0" stop-color="#f4f7fc"/><stop offset="0.5" stop-color="#d7e3f4"/><stop offset="1" stop-color="#b0c8e8"/></linearGradient></defs><circle cx="-30.81" cy="62.07" r="0.6" fill="#9aabc8"/><circle cx="-37.54" cy="58.25" r="0.6" fill="#9aabc8"/><circle cx="-43.80" cy="53.70" r="0.6" fill="#9aabc8"/><circle cx="-49.51" cy="48.49" r="0.6" fill="#9aabc8"/><circle cx="-59.02" cy="36.31" r="0.6" fill="#9aabc8"/><circle cx="-62.70" cy="29.51" r="0.6" fill="#9aabc8"/><circle cx="-65.60" cy="22.33" r="0.6" fill="#9aabc8"/><circle cx="-67.68" cy="14.88" r="0.6" fill="#9aabc8"/><circle cx="-69.30" cy="-0.48" r="0.6" fill="#9aabc8"/><circle cx="-68.81" cy="-8.21" r="0.6" fill="#9aabc8"/><circle cx="-67.47" cy="-15.82" r="0.6" fill="#9aabc8"/><circle cx="-65.28" cy="-23.25" r="0.6" fill="#9aabc8"/><circle cx="-58.51" cy="-37.13" r="0.6" fill="#9aabc8"/><circle cx="-54.01" cy="-43.42" r="0.6" fill="#9aabc8"/><circle cx="-48.83" cy="-49.17" r="0.6" fill="#9aabc8"/><circle cx="-43.05" cy="-54.31" r="0.6" fill="#9aabc8"/><circle cx="-29.94" cy="-62.50" r="0.6" fill="#9aabc8"/><circle cx="-22.79" cy="-65.45" r="0.6" fill="#9aabc8"/><circle cx="-15.35" cy="-67.58" r="0.6" fill="#9aabc8"/><circle cx="-7.72" cy="-68.87" r="0.6" fill="#9aabc8"/><circle cx="7.72" cy="-68.87" r="0.6" fill="#9aabc8"/><circle cx="15.35" cy="-67.58" r="0.6" fill="#9aabc8"/><circle cx="22.79" cy="-65.45" r="0.6" fill="#9aabc8"/><circle cx="29.94" cy="-62.50" r="0.6" fill="#9aabc8"/><circle cx="43.05" cy="-54.31" r="0.6" fill="#9aabc8"/><circle cx="48.83" cy="-49.17" r="0.6" fill="#9aabc8"/><circle cx="54.01" cy="-43.42" r="0.6" fill="#9aabc8"/><circle cx="58.51" cy="-37.13" r="0.6" fill="#9aabc8"/><circle cx="65.28" cy="-23.25" r="0.6" fill="#9aabc8"/><circle cx="67.47" cy="-15.82" r="0.6" fill="#9aabc8"/><circle cx="68.81" cy="-8.21" r="0.6" fill="#9aabc8"/><circle cx="69.30" cy="-0.48" r="0.6" fill="#9aabc8"/><circle cx="67.68" cy="14.88" r="0.6" fill="#9aabc8"/><circle cx="65.60" cy="22.33" r="0.6" fill="#9aabc8"/><circle cx="62.70" cy="29.51" r="0.6" fill="#9aabc8"/><circle cx="59.02" cy="36.31" r="0.6" fill="#9aabc8"/><circle cx="49.51" cy="48.49" r="0.6" fill="#9aabc8"/><circle cx="43.80" cy="53.70" r="0.6" fill="#9aabc8"/><circle cx="37.54" cy="58.25" r="0.6" fill="#9aabc8"/><circle cx="30.81" cy="62.07" r="0.6" fill="#9aabc8"/><line x1="-24.45" y1="67.19" x2="-21.68" y2="59.58" stroke="#5b79a4" stroke-width="1.2"/><line x1="-56.34" y1="44.02" x2="-49.96" y2="39.03" stroke="#5b79a4" stroke-width="1.2"/><line x1="-71.11" y1="7.47" x2="-63.05" y2="6.63" stroke="#5b79a4" stroke-width="1.2"/><line x1="-64.26" y1="-31.34" x2="-56.98" y2="-27.79" stroke="#5b79a4" stroke-width="1.2"/><line x1="-37.89" y1="-60.64" x2="-33.60" y2="-53.77" stroke="#5b79a4" stroke-width="1.2"/><line x1="-0.00" y1="-71.50" x2="-0.00" y2="-63.40" stroke="#5b79a4" stroke-width="1.2"/><line x1="37.89" y1="-60.64" x2="33.60" y2="-53.77" stroke="#5b79a4" stroke-width="1.2"/><line x1="64.26" y1="-31.34" x2="56.98" y2="-27.79" stroke="#5b79a4" stroke-width="1.2"/><line x1="71.11" y1="7.47" x2="63.05" y2="6.63" stroke="#5b79a4" stroke-width="1.2"/><line x1="56.34" y1="44.02" x2="49.96" y2="39.03" stroke="#5b79a4" stroke-width="1.2"/><line x1="24.45" y1="67.19" x2="21.68" y2="59.58" stroke="#5b79a4" stroke-width="1.2"/><text x="-19.00" y="52.70" text-anchor="middle" font-family="'Liberation Sans',sans-serif" font-size="8.4" fill="#000">0%</text><text x="-40.90" y="33.80" text-anchor="middle" font-family="'Liberation Sans',sans-serif" font-size="8.4" fill="#000">10%</text><text x="-50.60" y="7.05" text-anchor="middle" font-family="'Liberation Sans',sans-serif" font-size="8.4" fill="#000">20%</text><text x="-44.80" y="-20.00" text-anchor="middle" font-family="'Liberation Sans',sans-serif" font-size="8.4" fill="#000">30%</text><text x="-28.90" y="-44.00" text-anchor="middle" font-family="'Liberation Sans',sans-serif" font-size="8.4" fill="#000">40%</text><text x="0.00" y="-53.20" text-anchor="middle" font-family="'Liberation Sans',sans-serif" font-size="8.4" fill="#000">50%</text><text x="28.20" y="-44.00" text-anchor="middle" font-family="'Liberation Sans',sans-serif" font-size="8.4" fill="#000">60%</text><text x="44.20" y="-20.00" text-anchor="middle" font-family="'Liberation Sans',sans-serif" font-size="8.4" fill="#000">70%</text><text x="49.70" y="7.05" text-anchor="middle" font-family="'Liberation Sans',sans-serif" font-size="8.4" fill="#000">80%</text><text x="40.50" y="33.80" text-anchor="middle" font-family="'Liberation Sans',sans-serif" font-size="8.4" fill="#000">90%</text><text x="18.40" y="52.70" text-anchor="middle" font-family="'Liberation Sans',sans-serif" font-size="8.4" fill="#000">100%</text><path d="M-10.26 28.19 A30 30 0 0 1 -29.84 3.14" fill="none" stroke="#00ff00" stroke-width="7"/><path d="M-29.84 3.14 A30 30 0 0 1 -26.96 -13.15" fill="none" stroke="#ffff00" stroke-width="7"/><path d="M-26.96 -13.15 A30 30 0 1 1 10.26 28.19" fill="none" stroke="#ff0000" stroke-width="7"/><g transform="rotate(21)"><path d="M-2.2 2 L-2.2 43 L1.8 52 L2.6 52 L6.4 38 L6.4 2 Z" fill="#55657f" opacity="0.5"/><path d="M-4.3 0 L-4.3 42 L-0.4 51.2 L0.5 51.2 L4.3 37 L4.3 0 Z" fill="url(#ndc)" stroke="#c24848" stroke-width="0.5"/></g><circle cx="1.5" cy="1.7" r="15" fill="#56667f" opacity="0.55"/><circle cx="0" cy="0" r="14.8" fill="url(#hbc)" stroke="#8896ad" stroke-width="0.6"/></svg>
<div class="t" style="left:363px;width:800px;text-align:center;top:470px;font-size:27.5px;line-height:27.5px;color:#2b2b33;line-height:32px">Defects Per Million Opportunities</div>
<div style="left:433px;top:515px;width:647px;height:257px;border:1px solid #27457a;background:linear-gradient(#97a8ca,#ebeff6)"></div>
<div style="left:452px;top:530px;width:608.5px;height:232.5px;background:#fff"></div>
<div class="bb" style="left:1100px;top:166.5px;width:375px;height:284px;"></div>
<div class="lbl" style="left:887px;width:800px;text-align:center;top:176px;font-size:18.7px;line-height:18.7px;line-height:22px">Percentage Complete</div>
<div style="left:1114px;top:208px;width:347.8px;height:139px;border:1px solid #27457a;background:linear-gradient(#98a9ca,#e9edf5)"></div>
<svg style="left:1114px;top:208px" width="348" height="139" viewBox="1114 208 348 139">
<defs><radialGradient id="pie" cx="0.5" cy="0.5" r="0.5"><stop offset="0" stop-color="#fff"/><stop offset="0.74" stop-color="#fff"/><stop offset="0.87" stop-color="#dedede"/><stop offset="1" stop-color="#909090"/></radialGradient></defs>
<circle cx="1213.7" cy="277.4" r="61.6" fill="url(#pie)" stroke="#3c3c3c" stroke-width="0.8"/>
<line x1="1213.7" y1="277.4" x2="1275.3" y2="277.4" stroke="#222" stroke-width="0.8"/>
<rect x="1321.5" y="218.3" width="20.5" height="10" rx="1" fill="#2fcc2f" stroke="#222" stroke-width="0.8"/>
<rect x="1321.5" y="233.5" width="20.5" height="10.3" rx="1" fill="#fff" stroke="#222" stroke-width="0.8"/>
<text x="1346" y="227.5" font-family="'Liberation Sans',sans-serif" font-size="10.7" fill="#000">Completed: 0%</text>
<text x="1346" y="242.6" font-family="'Liberation Sans',sans-serif" font-size="10.7" fill="#000">Remaining: 100%</text>
</svg>
<div class="lbl" style="left:887.2px;width:800px;text-align:center;top:364px;font-size:19.2px;line-height:19.2px;line-height:22px">Projected Time to Complete</div>
<div style="left:1146.5px;top:396px;width:282.5px;height:43.5px;background:linear-gradient(#9aadcb 0%,#ccd6e6 22%,#ffffff 50%,#ccd6e6 78%,#9aadcb 100%)"></div>
<div class="dc" style="left:1146.2px;top:396px;width:28.35px;height:43.5px;line-height:45px;font-size:33.4px">0</div>
<div class="dc" style="left:1174.5px;top:396px;width:28.35px;height:43.5px;line-height:45px;font-size:33.4px">7</div>
<div class="dc" style="left:1202.9px;top:396px;width:28.35px;height:43.5px;line-height:45px;font-size:33.4px">:</div>
<div class="dc" style="left:1231.2px;top:396px;width:28.35px;height:43.5px;line-height:45px;font-size:33.4px">2</div>
<div class="dc" style="left:1259.6px;top:396px;width:28.35px;height:43.5px;line-height:45px;font-size:33.4px">2</div>
<div class="dc" style="left:1288.0px;top:396px;width:28.35px;height:43.5px;line-height:45px;font-size:33.4px">:</div>
<div class="dc" style="left:1316.3px;top:396px;width:28.35px;height:43.5px;line-height:45px;font-size:33.4px">2</div>
<div class="dc" style="left:1344.7px;top:396px;width:28.35px;height:43.5px;line-height:45px;font-size:33.4px">3</div>
<div class="dc" style="left:1373.0px;top:396px;width:28.35px;height:43.5px;line-height:45px;font-size:33.4px">P</div>
<div class="dc" style="left:1401.4px;top:396px;width:28.35px;height:43.5px;line-height:45px;font-size:33.4px">M</div>
<div class="bb" style="left:1100px;top:459.5px;width:180px;height:131.5px;"></div>
<div class="bb" style="left:1295px;top:459.5px;width:180.5px;height:131.5px;"></div>
<div class="lbl" style="left:790px;width:800px;text-align:center;top:468px;font-size:19.3px;line-height:19.3px;line-height:22px">Completed Units</div>
<div class="lbl" style="left:985.5px;width:800px;text-align:center;top:468px;font-size:19.15px;line-height:19.15px;line-height:22px">Remaining Units</div>
<div style="left:1114px;top:493px;width:153.5px;height:90px;background:#c0ffc0;border:1px solid #000"></div>
<div style="left:1309px;top:493px;width:153.5px;height:90px;background:#ffffc0;border:1px solid #000"></div>
<div class="t" style="left:789.8px;width:800px;text-align:center;top:527px;font-size:20.8px;line-height:20.8px;line-height:24px;color:#2b2b33">9999</div>
<div class="t" style="left:984.8px;width:800px;text-align:center;top:527px;font-size:20.8px;line-height:20.8px;line-height:24px;color:#2b2b33">9999</div>
<div class="lbl" style="left:887.5999999999999px;width:800px;text-align:center;top:600.8px;font-size:18.6px;line-height:18.6px;line-height:22px">Units Ready for Processing</div>
<div class="dig" style="left:1212px;top:633px;width:146px;height:41px;"></div>
<div class="dc" style="left:1212.3px;top:633px;width:36px;height:41px;line-height:41.5px;font-size:30.7px">0</div>
<div class="dc" style="left:1248.3px;top:633px;width:36px;height:41px;line-height:41.5px;font-size:30.7px">0</div>
<div class="dc" style="left:1284.3px;top:633px;width:36px;height:41px;line-height:41.5px;font-size:30.7px">0</div>
<div class="dc" style="left:1320.3px;top:633px;width:36px;height:41px;line-height:41.5px;font-size:30.7px">0</div>
<div style="left:1100px;top:681px;width:374.5px;height:68px;border:1px solid #1f3f6f;background:linear-gradient(#94a6c6 0%,#b5c1d8 22%,#e9edf5 47%,#b9c5da 72%,#98a9c8 100%)"></div>
<svg style="left:1100px;top:681px" width="375" height="68" viewBox="1100 681 375 68"><defs><linearGradient id="tri" x1="0" y1="0" x2="0" y2="1"><stop offset="0" stop-color="#ff9a9a"/><stop offset="1" stop-color="#ee1c1c"/></linearGradient></defs><rect x="1130" y="712.2" width="314.5" height="5.8" fill="#fff"/><path d="M1129.00 709.9 H1131.00 L1132.00 720.3 H1128.00Z" fill="#7d91b2"/><text x="1130.00" y="705" text-anchor="middle" font-family="'Liberation Sans',sans-serif" font-size="14.5" fill="#000">0</text><path d="M1145.67 712.2 L1146.77 715.1 L1145.67 718 L1144.57 715.1Z" fill="#bcc8dc"/><path d="M1161.34 712.2 L1162.44 715.1 L1161.34 718 L1160.24 715.1Z" fill="#bcc8dc"/><path d="M1177.01 712.2 L1178.11 715.1 L1177.01 718 L1175.91 715.1Z" fill="#bcc8dc"/><path d="M1191.68 709.9 H1193.68 L1194.68 720.3 H1190.68Z" fill="#7d91b2"/><text x="1192.68" y="705" text-anchor="middle" font-family="'Liberation Sans',sans-serif" font-size="14.5" fill="#000">20</text><path d="M1208.35 712.2 L1209.45 715.1 L1208.35 718 L1207.25 715.1Z" fill="#bcc8dc"/><path d="M1224.02 712.2 L1225.12 715.1 L1224.02 718 L1222.92 715.1Z" fill="#bcc8dc"/><path d="M1239.69 712.2 L1240.79 715.1 L1239.69 718 L1238.59 715.1Z" fill="#bcc8dc"/><path d="M1254.36 709.9 H1256.36 L1257.36 720.3 H1253.36Z" fill="#7d91b2"/><text x="1255.36" y="705" text-anchor="middle" font-family="'Liberation Sans',sans-serif" font-size="14.5" fill="#000">40</text><path d="M1271.03 712.2 L1272.13 715.1 L1271.03 718 L1269.93 715.1Z" fill="#bcc8dc"/><path d="M1286.70 712.2 L1287.80 715.1 L1286.70 718 L1285.60 715.1Z" fill="#bcc8dc"/><path d="M1302.37 712.2 L1303.47 715.1 L1302.37 718 L1301.27 715.1Z" fill="#bcc8dc"/><path d="M1317.04 709.9 H1319.04 L1320.04 720.3 H1316.04Z" fill="#7d91b2"/><text x="1318.04" y="705" text-anchor="middle" font-family="'Liberation Sans',sans-serif" font-size="14.5" fill="#000">60</text><path d="M1333.71 712.2 L1334.81 715.1 L1333.71 718 L1332.61 715.1Z" fill="#bcc8dc"/><path d="M1349.38 712.2 L1350.48 715.1 L1349.38 718 L1348.28 715.1Z" fill="#bcc8dc"/><path d="M1365.05 712.2 L1366.15 715.1 L1365.05 718 L1363.95 715.1Z" fill="#bcc8dc"/><path d="M1379.72 709.9 H1381.72 L1382.72 720.3 H1378.72Z" fill="#7d91b2"/><text x="1380.72" y="705" text-anchor="middle" font-family="'Liberation Sans',sans-serif" font-size="14.5" fill="#000">80</text><path d="M1396.39 712.2 L1397.49 715.1 L1396.39 718 L1395.29 715.1Z" fill="#bcc8dc"/><path d="M1412.06 712.2 L1413.16 715.1 L1412.06 718 L1410.96 715.1Z" fill="#bcc8dc"/><path d="M1427.73 712.2 L1428.83 715.1 L1427.73 718 L1426.63 715.1Z" fill="#bcc8dc"/><path d="M1442.40 709.9 H1444.40 L1445.40 720.3 H1441.40Z" fill="#7d91b2"/><text x="1443.40" y="705" text-anchor="middle" font-family="'Liberation Sans',sans-serif" font-size="14.5" fill="#000">100</text><path d="M1131.2 720.6 L1138.2 733.6 H1124.4Z" fill="#5b6b86" opacity="0.5"/><path d="M1130.3 719.8 L1137.2 732.5 H1123.5Z" fill="url(#tri)" stroke="#3a1414" stroke-width="0.8" stroke-linejoin="miter"/></svg>
</body></html>
